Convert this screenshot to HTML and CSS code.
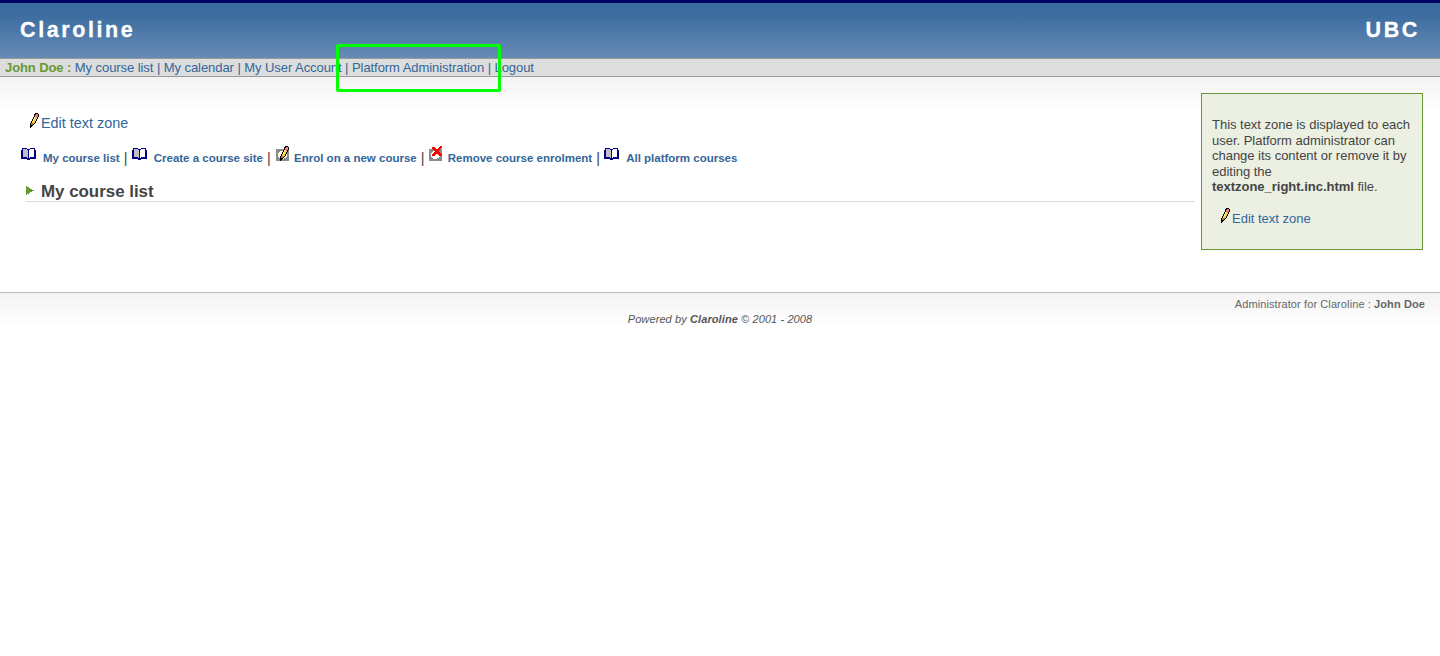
FILE: index.html
```html
<!DOCTYPE html>
<html lang="en">
<head>
<meta charset="utf-8">
<title>Claroline</title>
<link rel="stylesheet" href="styles.css">
</head>
<body>
<svg class="defs" width="0" height="0">
  <symbol id="pencil" viewBox="0 0 10 15">
    <path fill="#000" d="M5 0h3v1h1v3h-1v2h-1v2h-1v2h-1v1h-1v1h-1v1h-1v1h-1v1h-1v-5h1v-2h1v-2h1v-2h1v-3h1z"/>
    <path fill="#ffce31" d="M5 4h2v2h-1v2h-1v2h-3v-2h1v-2h1v-2z"/>
    <path fill="#fff3a0" d="M4 4h1v2h-1v2h-1v-2h1z"/>
    <path fill="#bd7b29" d="M1 10h3v1h-1v1h-2z"/>
    <path fill="#f77b83" d="M6 1h2v3h-1v1h-1v-1h-1v-2h1z"/>
  </symbol>
  <symbol id="book" viewBox="0 0 15 12">
    <path fill="#00008b" d="M1 0h5v1h3v-1h5v2h1v9h-6v1h-3v-1h-6v-9h1z"/>
    <path fill="#c0c0c0" d="M2 1h4v1h1v8h-1v-1h-4z"/>
    <path fill="#fff" d="M9 1h4v8h-4v1h-1v-8h1z"/>
  </symbol>
  <symbol id="disc" viewBox="0 0 13 12">
    <path fill="#8c8c8c" d="M0 0h13v12h-13z"/>
    <path fill="#fff" d="M4 2h5v1h2v5h-1v1h-2v1h-4v-1h-1v-1h-1v-4h1v-1h1z"/>
  </symbol>
</svg>
<header class="banner"><span class="site">Claroline</span><span>UBC</span></header>
<nav class="userbar">
  <b>John Doe : </b><a>My course list | </a><a>My calendar | </a><a>My User Account | </a><a>Platform Administration | </a><a>Logout</a>
  <div class="highlight"></div>
</nav>
<div class="page">
  <main>
    <a class="edit"><svg width="10" height="15"><use href="#pencil"/></svg><span>Edit text zone</span></a>
    <div class="commands">
      <svg class="book" width="15" height="12"><use href="#book"/></svg><a>My course list</a><span class="sep">|</span>
      <svg class="book" width="15" height="12"><use href="#book"/></svg><a>Create a course site</a><span class="sep">|</span>
      <svg class="tool" width="14" height="16"><use href="#disc" y="4" width="13" height="12"/><use href="#pencil" x="4" y="1" width="10" height="15"/></svg><a>Enrol on a new course</a><span class="sep">|</span>
      <svg class="tool remove" width="14" height="16"><use href="#disc" y="4" width="13" height="12"/><path fill="#f00" d="M3 2h3v1h1v1h2v-1h1v-1h1v-1h2v2h-1v1h-1v1h-1v2h1v1h1v1h1v2h-3v-1h-1v-1h-2v1h-1v1h-3v-2h1v-1h1v-1h1v-1h-1v-1h-1v-1h-1z"/></svg><a>Remove course enrolment</a><span class="sep">|</span>
      <svg class="book" width="15" height="12"><use href="#book"/></svg><a>All platform courses</a>
    </div>
    <h1><svg width="8" height="9"><path fill="#693" d="M0 0L8 4.500L0 9z"/></svg><span>My course list</span></h1>
  </main>
  <aside>
    <p>This text zone is displayed to each<br>user. Platform administrator can<br>change its content or remove it by<br>editing the<br><b>textzone_right.inc.html</b> file.</p>
    <a class="edit"><svg width="10" height="15"><use href="#pencil"/></svg><span>Edit text zone</span></a>
  </aside>
</div>
<footer>
  <div class="admin">Administrator for Claroline : <b>John Doe</b></div>
  <div class="powered">Powered by <b>Claroline</b> © 2001 - 2008</div>
</footer>
</body>
</html>
```
FILE: styles.css
```css
* { box-sizing: border-box; }
body { margin: 0; background: #fff; color: #444; font: 13px/16px "Liberation Sans", Arial, sans-serif; }
svg { display: block; flex: none; shape-rendering: crispEdges; }
.defs { position: absolute; }
a { color: #369; }
span, a { white-space: nowrap; }
.banner {
  height: 58px; padding: 14px 20px 0 20px; border-top: 3px solid #006;
  display: flex; justify-content: space-between;
  background: linear-gradient(#3b6c9f 20%, #678bb5);
  color: #fff; font-size: 21.500px; line-height: 27px; font-weight: bold; letter-spacing: 2.600px;
  -webkit-text-stroke: .3px #fff;
}
.userbar {
  position: relative; height: 19px; padding-left: 5px; line-height: 17px; letter-spacing: -.065px;
  border-top: 1px solid #999; border-bottom: 1px solid #999; background: #ddd; white-space: nowrap;
}
.userbar b { color: #693; letter-spacing: -.09px; }
.highlight { position: absolute; left: 336px; top: -15px; width: 165px; height: 48px; border: 3px solid #0f0; border-radius: 2px; }
.page {
  height: 215px; padding: 16px 17px 0 21px; display: flex; justify-content: space-between;
  background: linear-gradient(#f3f3f3, #fff 34px);
}
main { width: 1174px; padding-top: 19px; }
.edit { display: flex; margin-left: 8px; gap: 2px; }
.edit svg { margin: 1px -1px 0 1px; }
main .edit { font-size: 14.400px; line-height: 22px; height: 22px; }
.edit span { margin-left: 0; }
.commands { display: flex; height: 16px; margin-top: 11px; font-size: 11.500px; line-height: 17px; font-weight: bold; }
.commands a { padding-top: 5px; }
.sep { width: 12px; padding: 5px 0 0 4px; font-size: 14.400px; font-weight: normal; line-height: 16px; }
.book { margin: 3px 7px 0 0; }
.tool { margin: 0 4px 0 1px; }
.remove { margin: 0 5px 0 0; }
h1 { display: flex; gap: 7px; align-items: center; height: 22px; margin: 19px 0 0 5px; padding-top: 1px; border-bottom: 1px solid #ddd; font-size: 16.900px; line-height: 20px; }
h1 svg { margin-top: -2px; }
h1 span { padding-top: 1px; }
aside { width: 222px; height: 157px; padding: 23px 10px 0; border: 1px solid #693; background: #ebf0e2; }
aside p { margin: 0 0 12px; line-height: 15.600px; white-space: nowrap; letter-spacing: -.02px; }
aside .edit { line-height: 23px; }
footer { height: 40px; border-top: 1px solid #bbb; padding: 4px 15px 0; background: linear-gradient(#f3f3f3, #fff 34px); color: #666; font-size: 11px; line-height: 15px; letter-spacing: .1px; }
.admin { text-align: right; }
.powered { text-align: center; font-style: italic; color: #555; }
```
